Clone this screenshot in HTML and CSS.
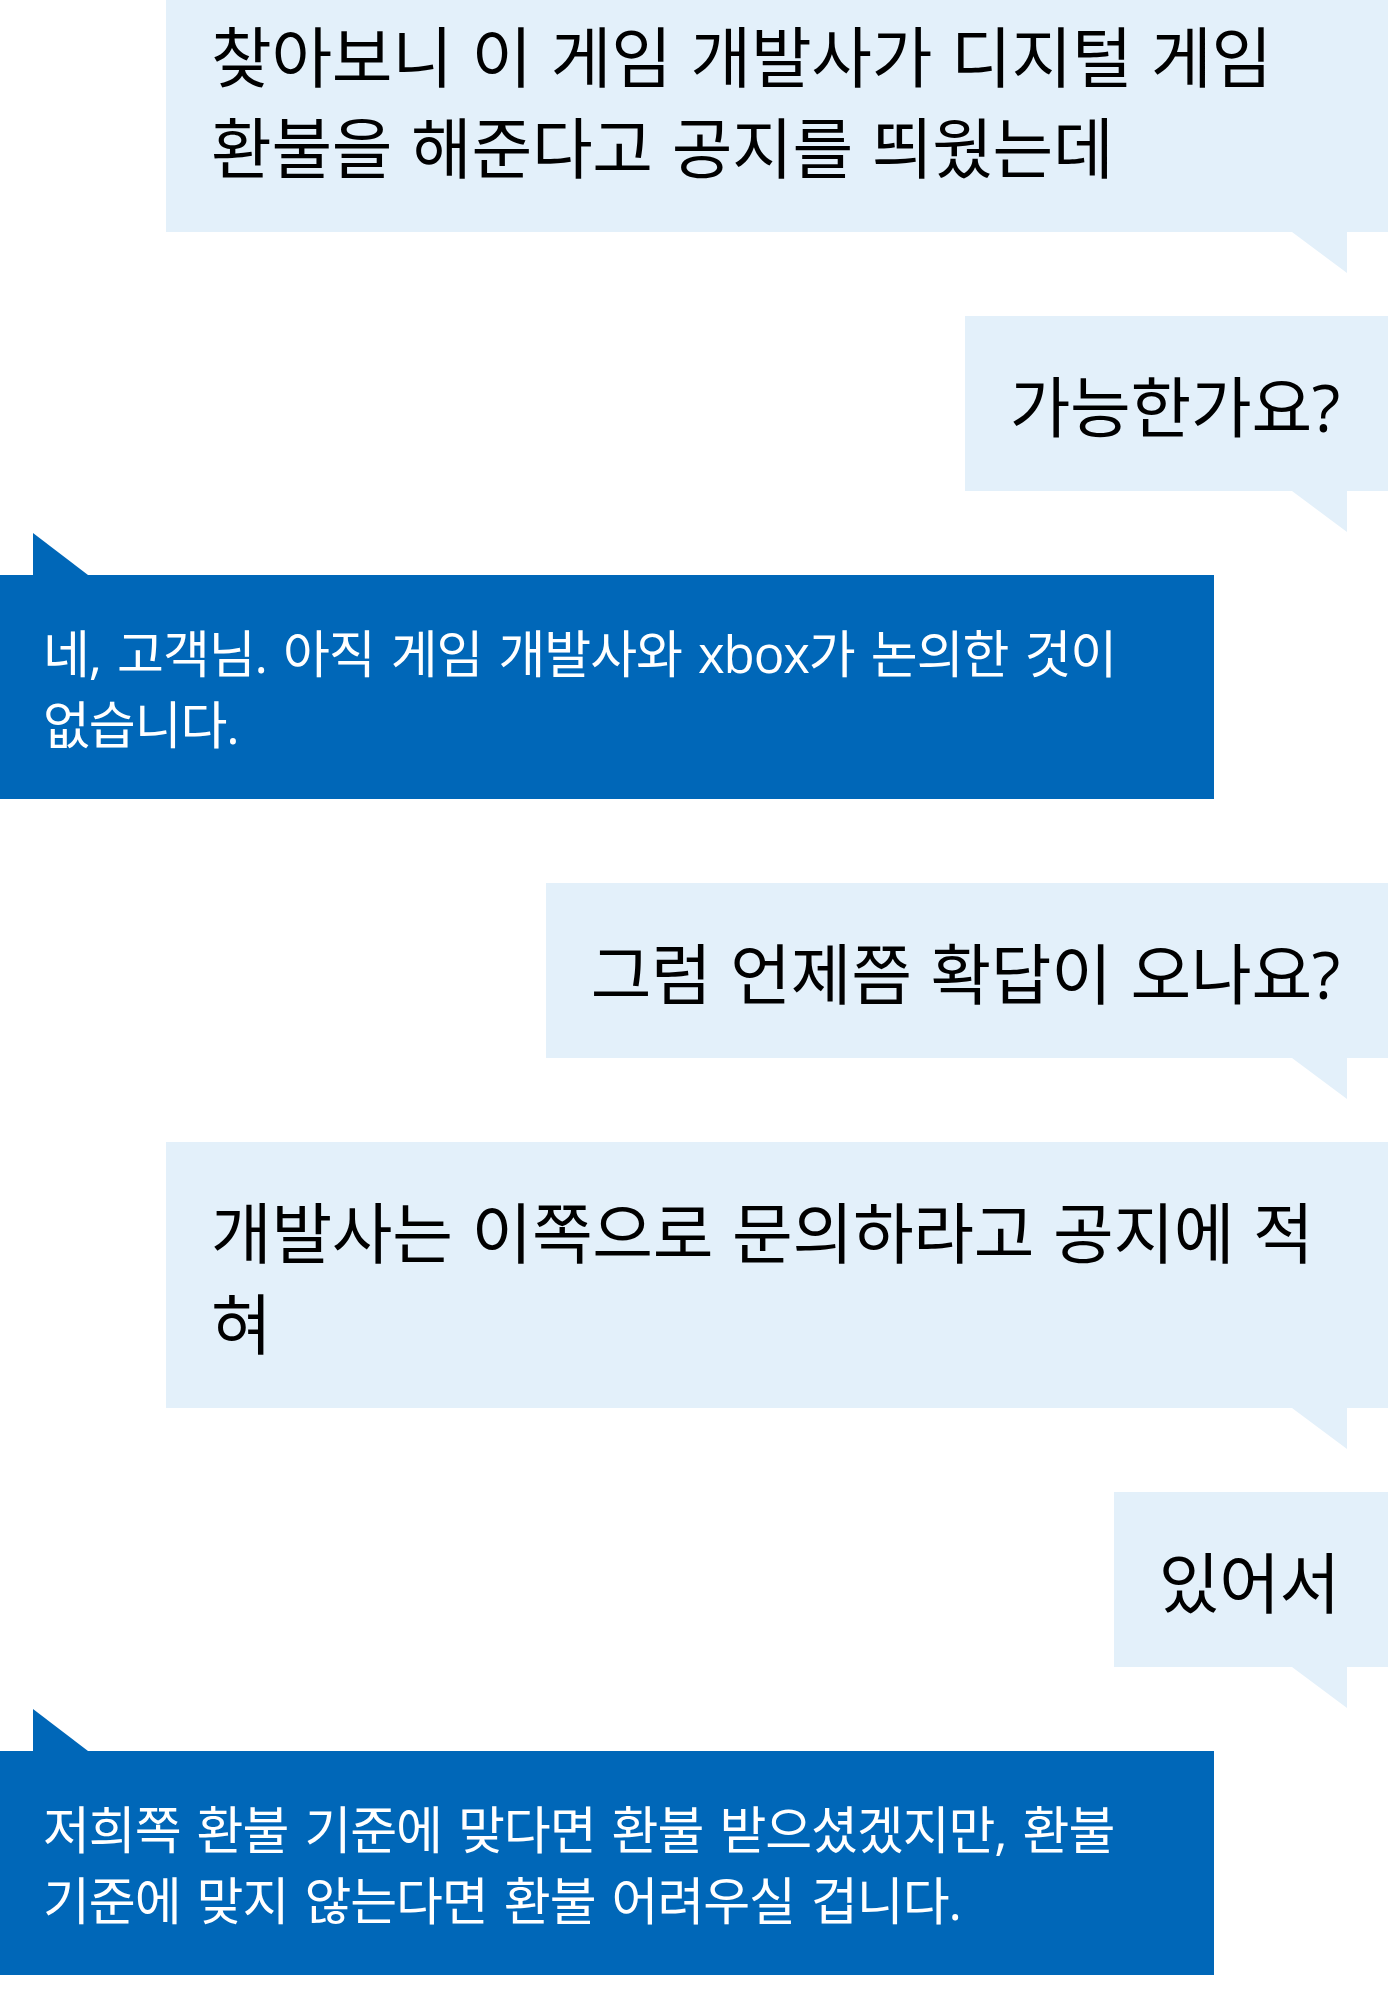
FILE: index.html
```html
<!DOCTYPE html>
<html lang="ko">
<head>
<meta charset="utf-8">
<title>채팅</title>
<link rel="stylesheet" href="styles.css">
</head>
<body>
<div class="chat">
  <div class="msg msg-user"><div class="bubble">찾아보니 이 게임 개발사가 디지털 게임 환불을 해준다고 공지를 띄웠는데</div></div>
  <div class="msg msg-user"><div class="bubble">가능한가요?</div></div>
  <div class="msg msg-agent"><div class="bubble">네, 고객님. 아직 게임 개발사와 xbox가 논의한 것이 없습니다.</div></div>
  <div class="msg msg-user"><div class="bubble">그럼 언제쯤 확답이 오나요?</div></div>
  <div class="msg msg-user"><div class="bubble">개발사는 이쪽으로 문의하라고 공지에 적혀</div></div>
  <div class="msg msg-user"><div class="bubble">있어서</div></div>
  <div class="msg msg-agent"><div class="bubble">저희쪽 환불 기준에 맞다면 환불 받으셨겠지만, 환불 기준에 맞지 않는다면 환불 어려우실 겁니다.</div></div>
</div>
</body>
</html>
```
FILE: styles.css
```css
html, body {
  margin: 0;
  padding: 0;
  background: #ffffff;
}

body {
  width: 1390px;
  overflow: hidden;
  font-family: "Open Sans", "Noto Sans CJK KR", sans-serif;
}

.chat {
  display: flex;
  flex-direction: column;
  gap: 84px;
  margin-top: -34px;
}

.msg {
  display: flex;
}

.msg-user {
  justify-content: flex-end;
  padding-right: 2px;
}

.msg-agent {
  justify-content: flex-start;
}

.bubble {
  position: relative;
  box-sizing: border-box;
  word-break: normal;
}

.msg-user .bubble {
  max-width: 1222px;
  background: #e3f0fa;
  color: #000000;
  font-size: 66px;
  line-height: 91px;
  letter-spacing: -0.3px;
  word-spacing: 2px;
  padding: 45px 48px 39px 45px;
}

.msg-user .bubble::after {
  content: "";
  position: absolute;
  top: 100%;
  right: 41px;
  width: 55px;
  height: 41px;
  background: #e3f0fa;
  clip-path: polygon(0 0, 100% 0, 100% 100%);
}

.msg-agent .bubble {
  max-width: 1214px;
  background: #0067b8;
  color: #ffffff;
  font-size: 51px;
  line-height: 71px;
  letter-spacing: -1.1px;
  word-spacing: 4px;
  padding: 43px 64px 39px 43px;
}

.msg-agent .bubble::before {
  content: "";
  position: absolute;
  bottom: 100%;
  left: 33px;
  width: 55px;
  height: 42px;
  background: #0067b8;
  clip-path: polygon(0 0, 100% 100%, 0 100%);
}
```
